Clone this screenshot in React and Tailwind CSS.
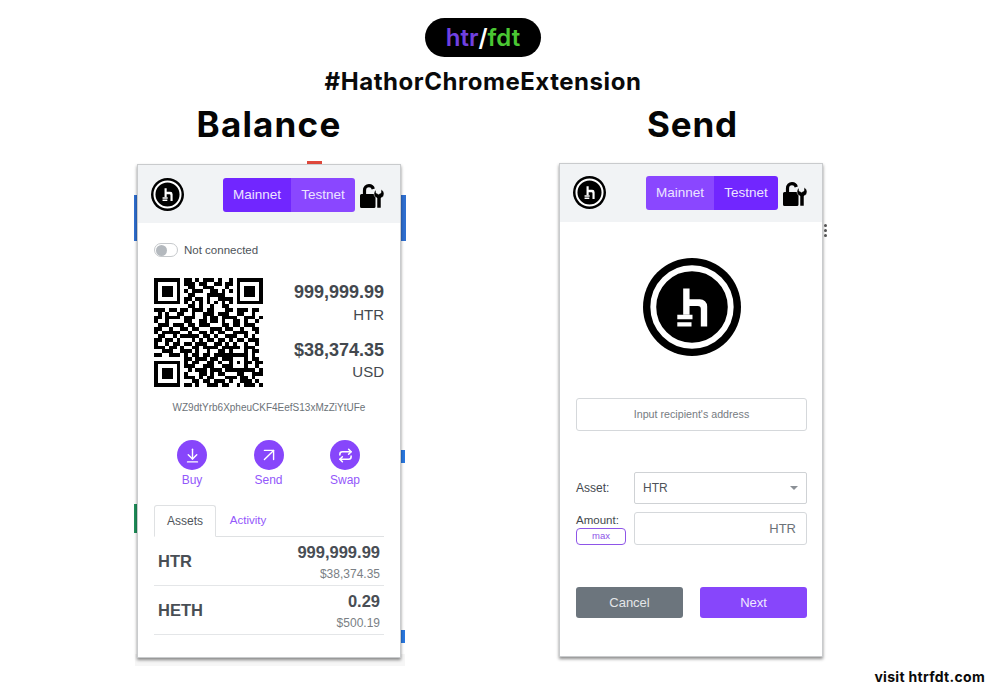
import { ArrowDownToLine, ArrowUpRight, Repeat } from "lucide-react";

// 29x29 code, spaces only mark the finder patterns and the alignment square
const QR = [
  "1111111 011010111010010 1111111",
  "1000001 011101100110110 1000001",
  "1011101 001100111000100 1011101",
  "1011101 010111001101010 1011101",
  "1011101 001100011111000 1011101",
  "1000001 011011010011110 1000001",
  "1111111 010101010101010 1111111",
  "00000000 0110100100110 00000000",
  "11101101101110110001101110110",
  "01010011001001110111001100100",
  "11011110111001011011110011101",
  "10010000110011011010011010010",
  "01110111011011100011011011100",
  "11001001101100011101100100110",
  "10111110010011010110011110010",
  "01100101111101101001110010100",
  "11011010001010110110101101110",
  "10010110110111001101010010010",
  "11101101001101111011111011100",
  "00111001110100100110100010110",
  "11001110101101101111 11111 0100",
  "00000000 110111011011 10001 0110",
  "1111111 0 101100110100 10101 1011",
  "1000001 0 111001110011 10001 0010",
  "1011101 0 010111011101 11111 1101",
  "1011101 0 100011010110 00110 0111",
  "1011101 0 111010110001 11011 0100",
  "1000001 0 001101101110 10011 1010",
  "1111111 0 110100111011 00101 1101",
];

function HathorLogo({ className }) {
  return (
    <svg viewBox="0 0 100 100" className={className}>
      <circle cx="50" cy="50" r="50" fill="#000" />
      <circle cx="50" cy="50" r="39.500" fill="none" stroke="#fff" strokeWidth="6" />
      <path d="M41 31h6.500v27H41zM47.500 42H58a7.500 7.500 0 0 1 7.500 7.500V70H59V52a3 3 0 0 0-3-3h-8.500z" fill="#fff" />
      <path d="M35 58h15.500v4.500H35zM35 65.500h14.500V70H35z" fill="#fff" />
    </svg>
  );
}

function LockWrench({ className }) {
  return (
    <svg viewBox="0 0 24 24" className={className}>
      <path d="M1.500 10h12.500a1.500 1.500 0 0 1 1.500 1.500v11a1.500 1.500 0 0 1-1.500 1.500H1.500A1.500 1.500 0 0 1 0 22.500v-11A1.500 1.500 0 0 1 1.500 10z" fill="#000" />
      <path d="M4.500 11V6.500C4.500 3.500 6.500 1.700 9 1.700c2.200 0 3.800 1.300 4.300 3.300" fill="none" stroke="#000" strokeWidth="3.200" />
      <path d="M16 5.500v3.300l2.500 1.400 2.500-1.400V5.500c1.900.9 3 2.500 3 4.300 0 2-1.200 3.600-3 4.300V24h-4V14.100c-1.800-.7-3-2.300-3-4.300 0-1.800 1-3.400 2.500-4.300z" fill="#000" stroke="#fff" strokeWidth="0.500" />
    </svg>
  );
}

function NetworkSwitch({ active }) {
  return (
    <div className="flex h-[34px] w-[132px] overflow-hidden rounded-[3px] text-[13.5px] text-[#ece4ff]">
      <div className={`flex w-[68px] items-center justify-center ${active === "main" ? "bg-[#7126ff]" : "bg-[#8a47ff]"}`}>
        Mainnet
      </div>
      <div className={`flex flex-1 items-center justify-center ${active === "test" ? "bg-[#7126ff]" : "bg-[#8a47ff]"}`}>
        Testnet
      </div>
    </div>
  );
}

function PopupHeader({ active, gap, top }) {
  return (
    <div className={`flex h-[58px] items-start bg-[#f1f3f5] pl-[13px] pr-[15px] ${top}`}>
      <HathorLogo className="h-[33px] w-[33px]" />
      <div className={gap}>
        <NetworkSwitch active={active} />
      </div>
      <LockWrench className="ml-[5px] mt-[6px] h-[24px] w-[24px]" />
    </div>
  );
}

function Action({ icon, label }) {
  return (
    <div className="flex w-[50px] flex-col items-center gap-[2px]">
      <div className="flex h-[30px] w-[30px] items-center justify-center rounded-full bg-[#8746fb] text-white">
        {icon}
      </div>
      <div className="text-[12px] leading-[16px] text-[#9358fb]">{label}</div>
    </div>
  );
}

function AssetRow({ name, amount, usd }) {
  return (
    <div className="flex h-[49px] items-center justify-between border-b border-[#e4e6e8] px-[4px] text-[#494e55]">
      <div className="text-[16.5px] font-bold">{name}</div>
      <div className="text-right">
        <div className="text-[16.5px] font-bold leading-[22px]">{amount}</div>
        <div className="mt-[3px] text-[12px] leading-[16px] text-[#7a7f85]">{usd}</div>
      </div>
    </div>
  );
}

function BalanceCard() {
  return (
    <div className="relative">
      {/* bits of the page behind the popup */}
      <div className="absolute -left-[3px] top-[31px] h-[46px] w-[272px] bg-[#2f6fd0]" />
      <div className="absolute -left-[3px] top-[340px] h-[29px] w-[10px] bg-[#1f8f5a]" />
      <div className="absolute right-[-4px] top-[286px] h-[13px] w-[10px] bg-[#2a78e0]" />
      <div className="absolute right-[-4px] top-[466px] h-[13px] w-[10px] bg-[#2a78e0]" />
      <div className="absolute left-[170px] top-[-3px] h-[6px] w-[15px] bg-[#e0483c]" />
      <div className="absolute -left-[2px] top-[490px] h-[12px] w-[270px] bg-[#f6f6f6]" />
      <div className="relative h-[494px] w-[264px] border border-[#c9cbcd] bg-white shadow-[0_2px_3px_rgba(0,0,0,0.45)]">
        <PopupHeader active="main" gap="ml-[39px]" top="pt-[13px]" />
        <div className="px-[16px]">
          <div className="mt-[19px] flex items-center gap-[6px] text-[11.5px] leading-[16px] text-[#4e5359]">
            <div className="flex h-[14px] w-[24px] items-center rounded-full border border-[#c6c9cc] pl-[1px]">
              <div className="h-[11px] w-[11px] rounded-full bg-[#b4b9be]" />
            </div>
            Not connected
          </div>
          <div className="mt-[20px] flex">
            <div className="grid h-[109px] w-[109px] shrink-0 grid-cols-[repeat(29,1fr)] grid-rows-[repeat(29,1fr)]">
              {QR.join("").replace(/ /g, "").split("").map((bit, i) => (
                <div key={i} className={bit === "1" ? "bg-black" : "bg-white"} />
              ))}
            </div>
            <div className="flex-1 pt-[3px] text-right text-[#43484e]">
              <div className="text-[18px] font-bold leading-[22px]">999,999.99</div>
              <div className="mt-[2px] text-[15px] leading-[20px]">HTR</div>
              <div className="mt-[14px] text-[18px] font-bold leading-[22px]">$38,374.35</div>
              <div className="mt-[1px] text-[15px] leading-[20px]">USD</div>
            </div>
          </div>
          <div className="mt-[14px] text-center text-[10px] leading-[14px] text-[#6c7278]">
            WZ9dtYrb6XpheuCKF4EefS13xMzZiYtUFe
          </div>
          <div className="mt-[25px] flex justify-between pl-[13px] pr-[14px]">
            <Action icon={<ArrowDownToLine size={17} />} label="Buy" />
            <Action icon={<ArrowUpRight size={22} strokeWidth={1.500} />} label="Send" />
            <Action icon={<Repeat size={15} strokeWidth={2.500} />} label="Swap" />
          </div>
          <div className="mt-[17px] flex h-[32px] border-b border-[#dfe1e3] text-[12px]">
            <div className="-mb-px flex w-[62px] items-center justify-center rounded-t-[3px] border border-b-white border-[#dfe1e3] bg-white text-[#50555b]">
              Assets
            </div>
            <div className="flex w-[64px] items-center justify-center text-[11.5px] text-[#9358fb]">Activity</div>
          </div>
          <AssetRow name="HTR" amount="999,999.99" usd="$38,374.35" />
          <AssetRow name="HETH" amount="0.29" usd="$500.19" />
        </div>
      </div>
    </div>
  );
}

function SendCard() {
  return (
    <div className="relative">
      <div className="absolute right-[-4px] top-[61px] flex flex-col gap-[2px]">
        <div className="h-[3px] w-[3px] rounded-full bg-[#555]" />
        <div className="h-[3px] w-[3px] rounded-full bg-[#555]" />
        <div className="h-[3px] w-[3px] rounded-full bg-[#555]" />
      </div>
      <div className="relative h-[494px] w-[264px] border border-[#c9cbcd] bg-white shadow-[0_2px_3px_rgba(0,0,0,0.45)]">
        <PopupHeader active="test" gap="ml-[40px]" top="pt-[12px]" />
        <div className="flex flex-col pl-[16px] pr-[15px]">
          <HathorLogo className="mx-auto mt-[36px] h-[98px] w-[98px]" />
          <div className="mt-[42px] flex h-[33px] items-center justify-center rounded-[3px] border border-[#d5d8db] text-[10.7px] text-[#767b81]">
            Input recipient's address
          </div>
          <div className="mt-[41px] flex items-center">
            <div className="w-[58px] text-[12px] text-[#43484e]">Asset:</div>
            <div className="flex h-[32px] flex-1 items-center justify-between rounded-[2px] border border-[#cfd2d5] px-[8px] text-[12px] text-[#4e5359]">
              HTR
              <div className="h-0 w-0 border-x-[4px] border-t-[4px] border-x-transparent border-t-[#8b9096]" />
            </div>
          </div>
          <div className="mt-[8px] flex items-center">
            <div className="w-[58px]">
              <div className="text-[11.5px] leading-[14px] text-[#43484e]">Amount:</div>
              <div className="mt-[1px] flex h-[17px] w-[50px] items-center justify-center rounded-[4px] border border-[#8e55e8] text-[9.5px] text-[#8e55e8]">
                max
              </div>
            </div>
            <div className="flex h-[33px] flex-1 items-center justify-end rounded-[3px] border border-[#d5d8db] pr-[10px] text-[13px] text-[#6c7278]">
              HTR
            </div>
          </div>
          <div className="mt-[42px] flex justify-between text-[13px]">
            <div className="flex h-[31px] w-[107px] items-center justify-center rounded-[3px] bg-[#6c757d] text-[#e4e6e8]">
              Cancel
            </div>
            <div className="flex h-[31px] w-[107px] items-center justify-center rounded-[3px] bg-[#8746fb] text-[#f1e9ff]">
              Next
            </div>
          </div>
        </div>
      </div>
    </div>
  );
}

export default function App() {
  return (
    <div className="relative flex h-[700px] w-[1000px] flex-col items-center overflow-hidden bg-white font-['Liberation_Sans',Arial,sans-serif]">
      <div className="ml-[-34px] mt-[18px] flex h-[39px] w-[116px] items-center justify-center rounded-full bg-black font-['Inter',sans-serif] text-[24px] font-semibold leading-none">
        <span className="text-[#7040e0]">htr</span>
        <span className="text-white">/</span>
        <span className="text-[#4ac733]">fdt</span>
      </div>
      <div className="ml-[-34px] mt-[10px] font-['Inter',sans-serif] text-[24px] font-bold leading-[30px] tracking-[0.55px] text-[#0a0a0a]">
        #HathorChromeExtension
      </div>
      <div className="mt-[5px] flex w-full">
        <div className="ml-[137px] flex w-[264px] flex-col items-center">
          <div className="h-[62px] font-['Inter',sans-serif] text-[35px] font-bold leading-[44px] tracking-[1.2px] text-[#050505]">Balance</div>
          <BalanceCard />
        </div>
        <div className="ml-[158px] flex w-[264px] flex-col items-center">
          <div className="mb-[-1px] h-[62px] pl-[3px] font-['Inter',sans-serif] text-[35px] font-bold leading-[44px] tracking-[0.8px] text-[#050505]">Send</div>
          <SendCard />
        </div>
      </div>
      <div className="absolute bottom-[14px] right-[15px] font-['Inter',sans-serif] text-[14px] font-bold leading-[18px] tracking-[0.3px] text-[#0a0a0a]">
        visit htrfdt.com
      </div>
    </div>
  );
}
